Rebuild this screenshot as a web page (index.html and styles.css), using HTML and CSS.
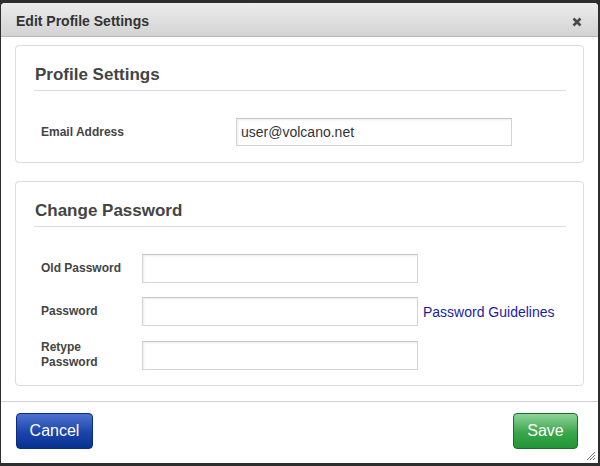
FILE: index.html
```html
<!DOCTYPE html>
<html>
<head>
<meta charset="utf-8">
<link rel="stylesheet" href="styles.css">
</head>
<body>
<div class="dialog">
  <div class="dialog-header">
    <span class="dialog-title">Edit Profile Settings</span>
    <span class="close" aria-label="close"><svg width="10" height="10" viewBox="0 0 10 10"><path d="M1.5 1.5 L8.5 8.5 M8.5 1.5 L1.5 8.5" stroke="#4a4a4a" stroke-width="2.6" stroke-linecap="butt"/></svg></span>
  </div>
  <div class="dialog-body">
    <div class="panel panel-profile">
      <h2 class="panel-title">Profile Settings</h2>
      <div class="row row-first">
        <label class="label label-wide">Email Address</label>
        <input class="field" type="text" value="user@volcano.net">
      </div>
    </div>
    <div class="panel panel-password">
      <h2 class="panel-title">Change Password</h2>
      <div class="row row-first">
        <label class="label">Old Password</label>
        <input class="field field-pw" type="password">
      </div>
      <div class="row">
        <label class="label">Password</label>
        <input class="field field-pw" type="password">
        <a class="guide" href="#">Password Guidelines</a>
      </div>
      <div class="row">
        <label class="label label-two">Retype<br>Password</label>
        <input class="field field-pw" type="password">
      </div>
    </div>
  </div>
  <div class="dialog-footer">
    <button class="btn btn-cancel">Cancel</button>
    <button class="btn btn-save">Save</button>
    <span class="grip"><svg width="10" height="10" viewBox="0 0 10 10"><path d="M9 1 L1 9 M9 4 L4 9 M9 7 L7 9" stroke="#777" stroke-width="1"/></svg></span>
  </div>
</div>
</body>
</html>
```

FILE: styles.css
```css
html, body {
  margin: 0;
  padding: 0;
}
body {
  background: #2e2e2e;
  width: 600px;
  height: 466px;
  padding: 3px 0 0 1px;
  box-sizing: border-box;
  font-family: "Liberation Sans", Arial, sans-serif;
  overflow: hidden;
}
.dialog {
  width: 597px;
  height: 460px;
  background: #fff;
  border-radius: 4px 4px 0 0;
  display: flex;
  flex-direction: column;
  position: relative;
}
.dialog-header {
  height: 33px;
  background: linear-gradient(#ececec, #d3d3d3);
  border-bottom: 1px solid #b9b9b9;
  border-radius: 4px 4px 0 0;
  display: flex;
  align-items: center;
  justify-content: space-between;
  padding: 0 16px 0 15px;
  flex: none;
}
.dialog-title {
  font-size: 14px;
  font-weight: bold;
  color: #333;
  position: relative;
  top: 1px;
}
.close {
  display: flex;
  position: relative;
  top: 2px;
}
.dialog-body {
  padding: 8px 14px 0 14px;
  flex: 1;
}
.panel {
  border: 1px solid #dcdcdc;
  border-radius: 4px;
  padding: 19px 17px 16px 18px;
}
.panel-password {
  margin-top: 18px;
  padding-bottom: 15px;
}
.panel-title {
  margin: 0;
  font-size: 17px;
  line-height: 20px;
  font-weight: bold;
  color: #444;
  padding: 0 0 5px 1px;
  border-bottom: 1px solid #dcdcdc;
}
.row {
  display: flex;
  align-items: center;
  margin-top: 14px;
}
.row-first {
  margin-top: 27px;
}
.label {
  width: 101px;
  padding-left: 7px;
  font-size: 12px;
  font-weight: bold;
  color: #444;
  line-height: 15px;
  flex: none;
}
.label-wide {
  width: 195px;
}
.field {
  width: 276px;
  height: 28px;
  box-sizing: border-box;
  border: 1px solid #d4d4d4;
  border-top-color: #c6c6c6;
  box-shadow: inset 1px 1px 2px rgba(0,0,0,0.08);
  margin: 0;
  padding: 0 4px;
  font-family: "Liberation Sans", Arial, sans-serif;
  font-size: 14px;
  color: #333;
  background: #fff;
  flex: none;
}
.field-pw {
  height: 29px;
}
.guide {
  margin-left: 5px;
  font-size: 14px;
  color: #1c1ca0;
  text-decoration: none;
}
.dialog-footer {
  flex: none;
  border-top: 1px solid #cfcfcf;
  padding: 11px 20px 0 15px;
  box-sizing: border-box;
  height: 62px;
  display: flex;
  justify-content: space-between;
  align-items: flex-start;
  position: relative;
}
.btn {
  height: 36px;
  border-radius: 4px;
  font-family: "Liberation Sans", Arial, sans-serif;
  font-size: 16px;
  color: #fff;
  padding: 0;
  cursor: pointer;
}
.btn-cancel {
  width: 77px;
  background: linear-gradient(#4f72cf, #1a44ab 55%, #08328f);
  border: 1px solid #0b2c84;
}
.btn-save {
  width: 65px;
  background: linear-gradient(#8fd39b, #3aa64b 55%, #229438);
  border: 1px solid #1f6b2b;
}
.grip {
  position: absolute;
  right: 2px;
  bottom: 2px;
  display: flex;
}
```
